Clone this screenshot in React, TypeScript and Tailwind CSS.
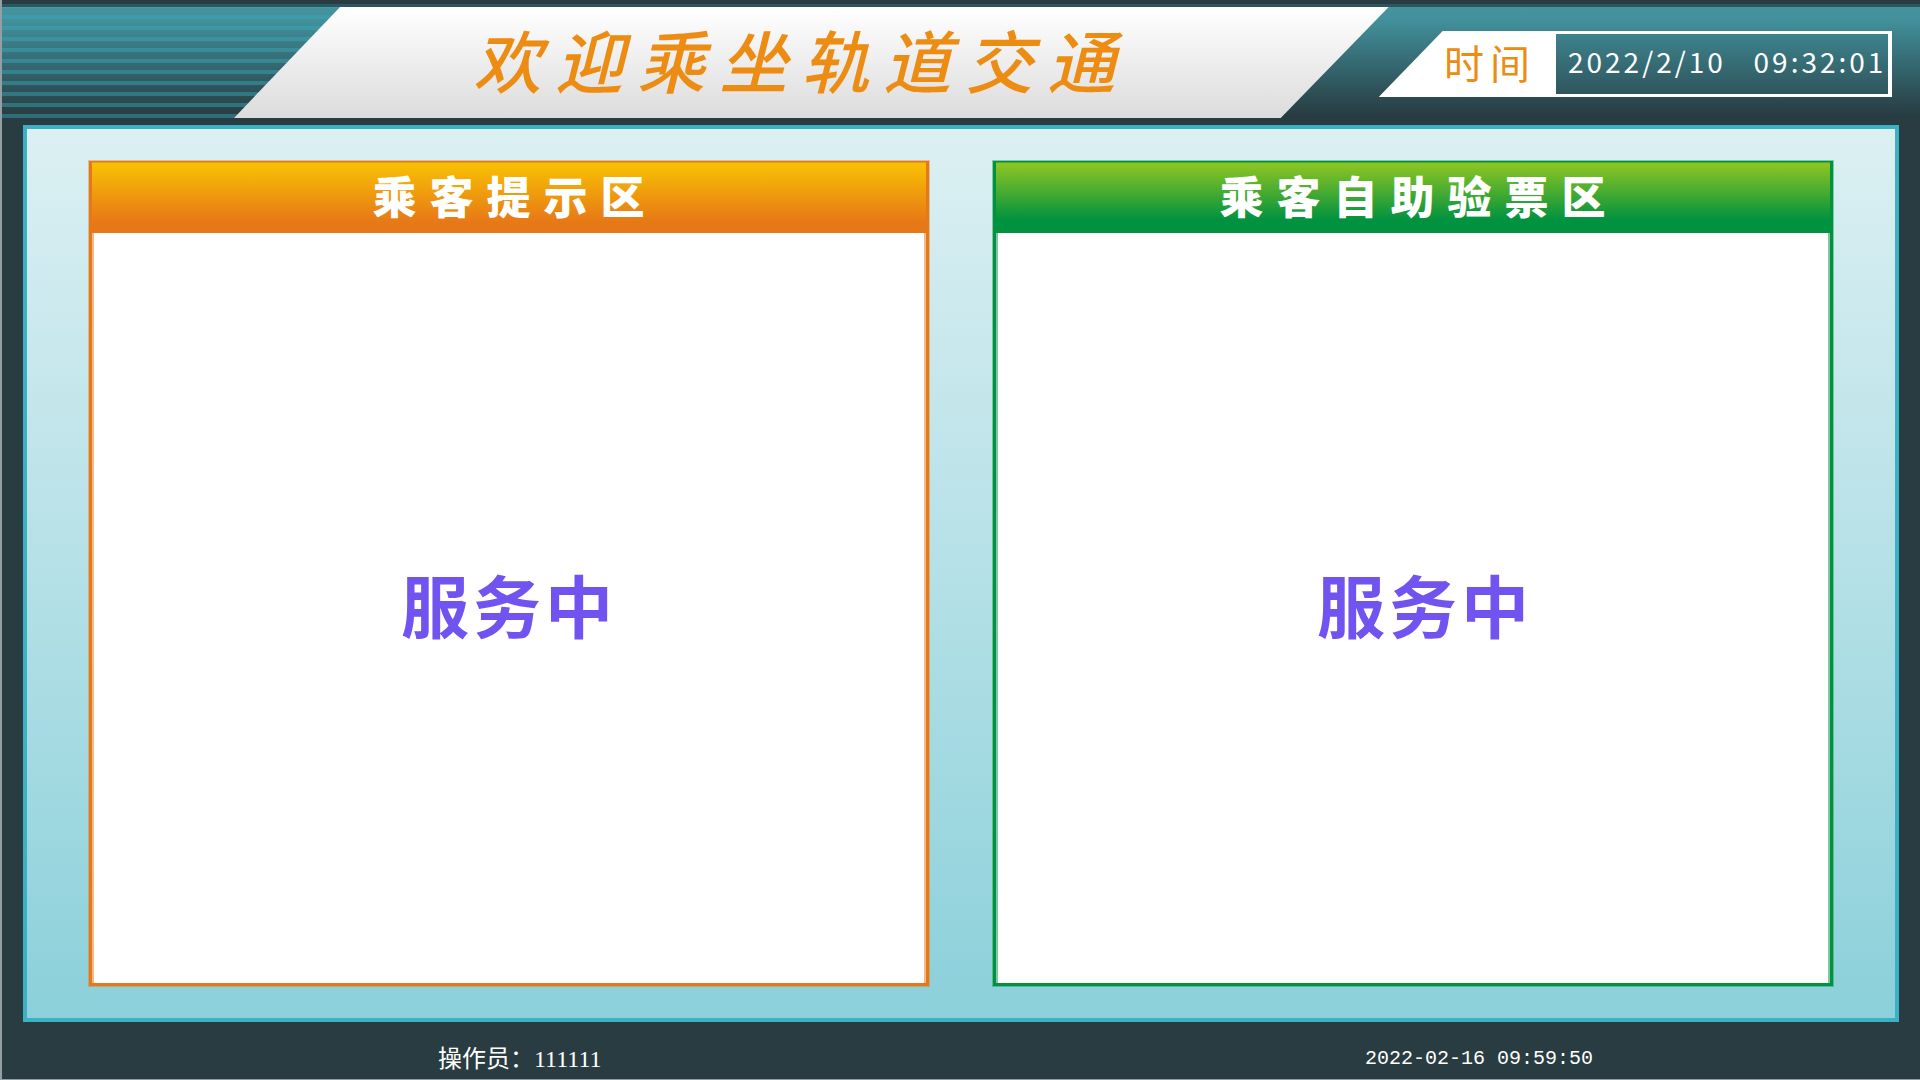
import type { ReactNode } from "react";

type Tone = "orange" | "green";

const tones: Record<Tone, { frame: string; bar: string; inner: string }> = {
  orange: {
    frame: "border-[#e77817] outline-[#e77817]/40",
    bar: "bg-[linear-gradient(to_bottom,#e77817_0,#e77817_1px,#f7bf04_2px,#f7bf04_4px,#e77817_85%)]",
    inner: "border-[#e77817]/50",
  },
  green: {
    frame: "border-[#00923f] outline-[#00923f]/40",
    bar: "bg-[linear-gradient(to_bottom,#00923f_0,#00923f_1px,#8ac424_2px,#8ac424_4px,#00923f_82%)]",
    inner: "border-[#00923f]/50",
  },
};

function Panel({ title, tone, children }: { title: string; tone: Tone; children: ReactNode }) {
  const t = tones[tone];
  return (
    <section className={`flex min-w-0 flex-1 flex-col border-3 border-t-0 bg-white outline-1 ${t.frame}`}>
      <h2
        className={`flex h-[72px] items-center justify-center pb-1 pl-3 text-[44px] leading-none font-black tracking-[13px] text-white ${t.bar}`}
      >
        {title}
      </h2>
      <div
        className={`flex flex-1 items-center justify-center border-x-2 pb-2 text-[68px] leading-none font-bold tracking-[4px] text-[#7154f0] ${t.inner}`}
      >
        {children}
      </div>
    </section>
  );
}

function Header() {
  return (
    <header className="pt-1 pb-[7px]">
      <div className="h-[3px] bg-[#2d565e]" />
      <div className="flex h-[111px] items-stretch bg-[repeating-linear-gradient(to_bottom,rgba(54,170,185,0.45)_0,rgba(54,170,185,0.45)_1px,transparent_1px,transparent_8px,rgba(54,170,185,0.45)_8px,rgba(54,170,185,0.45)_11px),linear-gradient(to_bottom,#44939f_0,#42909b_12%,#376f78_45%,#2e5158_75%,#263b40_100%)] bg-[size:20%_100%,100%_100%] bg-no-repeat">
        <div className="w-[12.1%]" />
        <div className="flex w-[60.2%] items-center justify-center bg-linear-to-b from-white to-[#dcdcdc] pr-5 pb-2 [clip-path:polygon(106px_0,100%_0,calc(100%-108px)_100%,0_100%)]">
          <h1 className="text-[68px] leading-none font-medium tracking-[14px] whitespace-nowrap text-[#ec8c12] italic">
            欢迎乘坐轨道交通
          </h1>
        </div>
        <div className="mt-6 mr-7 -ml-2.5 flex h-[66px] flex-1 bg-white pt-[3px] pr-1 pb-[3px] [clip-path:polygon(64px_0,100%_0,100%_100%,0_100%)]">
          <div className="flex flex-1 items-center justify-end pr-5 pb-1 text-[40px] leading-none tracking-[6px] whitespace-nowrap text-[#ec8c12]">
            时间
          </div>
          <time className="flex w-[332px] items-center bg-linear-to-b from-[#3d838d] to-[#2f565d] pb-1.5 pl-3 text-[28px] leading-none tracking-[3px] whitespace-pre text-white">
            2022/2/10{"   "}09:32:01
          </time>
        </div>
      </div>
    </header>
  );
}

export default function App() {
  return (
    <div className="flex min-h-screen flex-col border-b border-l-2 border-[#939fa1] bg-[#283c41] font-['Noto_Sans_CJK_SC',sans-serif]">
      <Header />
      <main className="mr-[21px] ml-[21px] flex flex-1 gap-16 border-4 border-[#3bb2c4] bg-linear-to-b from-[#dcf0f3] to-[#8bd0da] px-[62px] pt-8 pb-8">
        <Panel title="乘客提示区" tone="orange">
          <p>服务中</p>
        </Panel>
        <Panel title="乘客自助验票区" tone="green">
          <p className="pl-6">服务中</p>
        </Panel>
      </main>
      <footer className="flex h-[57px] items-center pt-4 text-2xl leading-none text-white">
        <p className="w-1/2 pl-[436px] font-['Liberation_Serif','Noto_Sans_CJK_SC',serif]">操作员：111111</p>
        <p className="w-1/2 pl-[404px] font-['Liberation_Mono',monospace] text-xl leading-none">2022-02-16 09:59:50</p>
      </footer>
    </div>
  );
}
